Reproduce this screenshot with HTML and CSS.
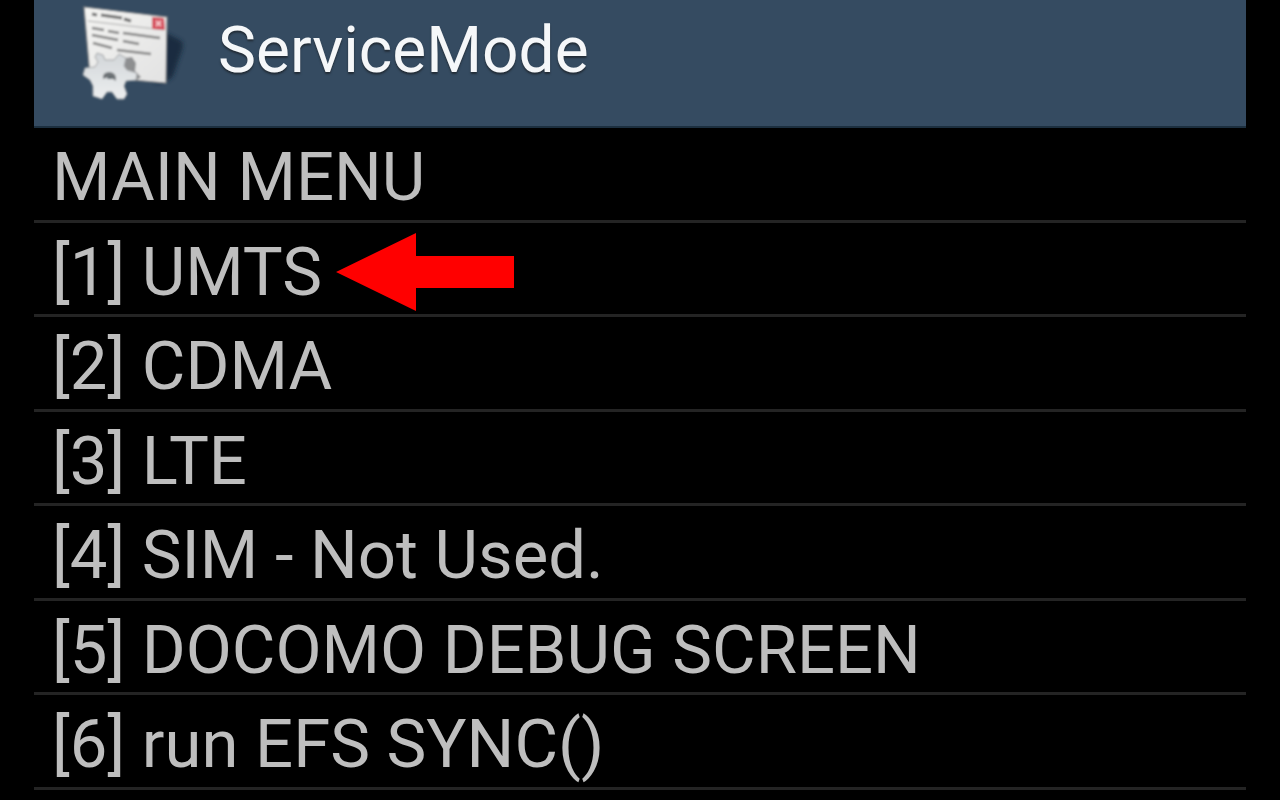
FILE: index.html
```html
<!DOCTYPE html>
<html lang="en">
<head>
<meta charset="utf-8">
<title>ServiceMode</title>
<link rel="stylesheet" href="styles.css">
</head>
<body>
<div class="screen">
  <header class="bar">
    <svg class="app-icon" viewBox="0 0 110 110" aria-hidden="true">
      <defs>
        <linearGradient id="paper" x1="0" y1="0" x2="1" y2="1"><stop offset="0" stop-color="#f4f4f2"/><stop offset="1" stop-color="#e2e2e2"/></linearGradient>
        <linearGradient id="gear" x1="0" y1="0" x2="0" y2="1"><stop offset="0" stop-color="#d2d6d9"/><stop offset="1" stop-color="#eceeef"/></linearGradient>
        <filter id="soft" x="-20%" y="-20%" width="140%" height="140%"><feGaussianBlur stdDeviation="1"/></filter>
        <filter id="shade" x="-50%" y="-50%" width="200%" height="200%"><feGaussianBlur stdDeviation="2"/></filter>
      </defs>
      <path d="M94 32L108 39Q115 41 112 50L103 76Q98 83 84 83Z" fill="#18283a" opacity=".85" filter="url(#shade)"/>
      <g filter="url(#soft)">
        <path d="M14 7L97 17L96 83L20 76Z" fill="url(#paper)" stroke="#8d8b8a" stroke-width="1.2"/>
        <path d="M18 21L94 30" stroke="#aaa" stroke-width="1.2"/>
        <path d="M22 14L27 15M31 15L52 18M54 19L61 21" stroke="#6e6e6e" stroke-width="3" fill="none"/>
        <path d="M22 28L34 30M38 31L49 33M53 33L90 38M22 35L48 40M53 41L69 44M23 43L42 48M47 50L81 54" stroke="#858585" stroke-width="2.4" fill="none"/>
        <path d="M82 17L94 18L95 30L82 29Z" fill="#d64e5c"/>
        <path d="M86 21L91 26M91 21L86 26" stroke="#f7c6c9" stroke-width="1.8"/>
        <path d="M55 58L62 57L66 63L65 71L71 77L66 81L50 76Z" fill="#77787a" opacity=".8"/>
        <path d="M27 53L33 55L35 60L44 60L49 54L56 58L54 66L57 70L67 73L66 80L56 81L54 86L57 94L54 99L47 99L42 92L37 92L32 99L23 96L23 86L20 80L13 75L15 68L25 67L28 62L25 57Z" fill="url(#gear)" stroke="#a3a5a7" stroke-width="1"/>
        <path d="M33 79Q32 72 40 72Q47 73 46 81Q39 75 33 79Z" fill="#6d7276"/>
        <path d="M37 79Q39 75 43 79Z" fill="#4f5b64"/>
      </g>
    </svg>
    <h1 class="title">ServiceMode</h1>
  </header>
  <main class="menu">
    <h2 class="row">MAIN MENU</h2>
    <button class="row" type="button">[1] UMTS
      <svg class="arrow" viewBox="0 0 178 78" aria-hidden="true"><path d="M0 39L80 0V23H178V55H80V78Z" fill="#f00"/></svg>
    </button>
    <button class="row" type="button">[2] CDMA</button>
    <button class="row" type="button">[3] LTE</button>
    <button class="row" type="button">[4] SIM - Not Used.</button>
    <button class="row" type="button">[5] DOCOMO DEBUG SCREEN</button>
    <button class="row" type="button">[6] run EFS SYNC()</button>
  </main>
</div>
</body>
</html>
```
FILE: styles.css
```css
* {
  box-sizing: border-box;
}

body {
  margin: 0;
  background: #000;
  font-family: Roboto, "Liberation Sans", sans-serif;
  overflow: hidden;
}

.screen {
  margin: 0 34px;
}

.bar {
  display: flex;
  align-items: flex-start;
  gap: 38px;
  height: 128px;
  padding-left: 36px;
  background: #354b61;
  border-bottom: 2px solid #1c2f3f;
}

.app-icon {
  width: 110px;
  height: 110px;
  overflow: visible;
}

.title {
  margin: 0;
  padding-top: 10px;
  color: #f5f7f9;
  font-size: 64px;
  font-weight: 400;
  line-height: 82px;
  text-shadow: 0 2px 2px #222c36;
}

.menu {
  display: flex;
  flex-direction: column;
}

.row {
  display: flex;
  align-items: center;
  gap: 14px;
  width: 100%;
  height: 94px;
  margin: 0;
  padding: 6px 18px 0;
  border: 0;
  border-bottom: 3px solid #242424;
  background: #000;
  color: #bebebe;
  font: 400 67px/80px Roboto, "Liberation Sans", sans-serif;
  text-align: left;
  white-space: nowrap;
}

.row:nth-child(odd) {
  height: 95px;
}

.arrow {
  width: 178px;
  height: 78px;
}
```
